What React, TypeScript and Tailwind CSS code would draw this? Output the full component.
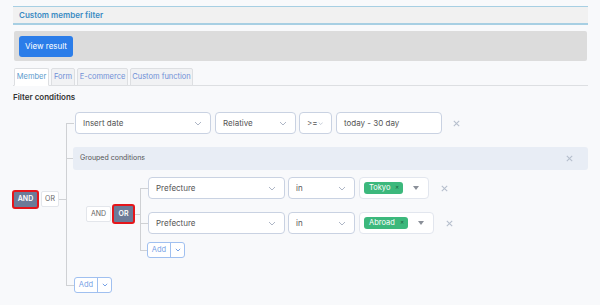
import React from 'react';

const Chevron: React.FC = () => (
  <svg width="8" height="5" viewBox="0 0 8 5" fill="none" stroke="#aeb6c6" strokeWidth="1">
    <path d="M1 1l3 3 3-3" />
  </svg>
);

const Close: React.FC<{ className?: string }> = ({ className }) => (
  <svg className={className} width="7" height="7" viewBox="0 0 7 7" fill="none" stroke="#b6bfcd" strokeWidth="1.1">
    <path d="M0.8 0.8l5.4 5.4M6.2 0.8l-5.4 5.4" />
  </svg>
);

const Select: React.FC<{ label: string; width: string }> = ({ label, width }) => (
  <div
    className={`flex items-center justify-between h-[22px] ${width} shrink-0 rounded-[4px] border border-[#c9d2e2] bg-white pl-[7px] pr-[8px] text-[8px] text-[#555]`}
  >
    <span>{label}</span>
    <Chevron />
  </div>
);

const MultiSelect: React.FC<{ tag: string }> = ({ tag }) => (
  <div className="flex items-center h-[22px] shrink-0 rounded-[4px] border border-[#e2e6ee] bg-white pl-[4px] pr-[9px] gap-[10px]">
    <span className="flex items-center gap-[5px] h-[12px] rounded-[3px] bg-[#3cb87c] pl-[5px] pr-[4px] text-[7.5px] text-white">
      {tag}
      <span className="text-[4.5px] leading-none text-[#1d5a3b]">✕</span>
    </span>
    <svg width="6" height="4" viewBox="0 0 6 4">
      <path d="M0 0h6L3 4z" fill="#8a8f98" />
    </svg>
  </div>
);

const Toggle: React.FC<{ active: 'AND' | 'OR'; outer?: boolean }> = ({ active, outer }) => {
  const andActive = active === 'AND';
  return (
    <div className={`flex items-center ${outer ? 'gap-[2px]' : 'gap-[1px]'}`}>
      <span
        className={
          andActive
            ? 'flex items-center justify-center h-[19px] w-[27px] rounded-[3px] border-2 border-[#e5161b] bg-[#6c7b98] text-[7px] font-semibold text-white'
            : 'flex items-center justify-center h-[16px] w-[25px] rounded-[2px] border border-[#e3e6eb] bg-white text-[7px] text-[#666]'
        }
      >
        AND
      </span>
      <span
        className={
          andActive
            ? 'flex items-center justify-center h-[16px] w-[18px] rounded-[2px] border border-[#e3e6eb] bg-white text-[7px] text-[#666]'
            : 'flex items-center justify-center h-[20px] w-[23px] rounded-[3px] border-2 border-[#e5161b] bg-[#6c7b98] text-[7px] font-semibold text-white'
        }
      >
        OR
      </span>
    </div>
  );
};

const AddButton: React.FC = () => (
  <div className="flex h-[16px] rounded-[3px] border border-[#a0c0f0] bg-white text-[7.5px] text-[#77a2e6]">
    <span className="flex items-center justify-center w-[23px] border-r border-[#a0c0f0]">Add</span>
    <span className="flex items-center justify-center w-[13px]">
      <svg width="6" height="4" viewBox="0 0 6 4" fill="none" stroke="#77a2e6" strokeWidth="1">
        <path d="M0.8 0.8L3 3l2.2-2.2" />
      </svg>
    </span>
  </div>
);

// one child of a condition tree, with its connector line on the left
const Branch: React.FC<{ first?: boolean; last?: boolean; top: string; pad?: string; width: string; children: React.ReactNode }> = ({
  first,
  last,
  top,
  pad = '',
  width,
  children,
}) => (
  <div className="flex">
    <div className={`flex flex-col ${width} shrink-0`}>
      <div className={`${top} shrink-0 ${first ? '' : 'border-l border-[#cfd1d4]'}`} />
      <div className={`flex-1 border-t border-[#cfd1d4] ${last ? '' : 'border-l'}`} />
    </div>
    <div className={`flex-1 ${pad}`}>{children}</div>
  </div>
);

const tabs = [
  { label: 'Member', w: 'w-[35px]' },
  { label: 'Form', w: 'w-[24px]' },
  { label: 'E-commerce', w: 'w-[51px]' },
  { label: 'Custom function', w: 'w-[63px]' },
];

const ConditionRow: React.FC<{ tag: string }> = ({ tag }) => (
  <div className="flex items-center">
    <Select label="Prefecture" width="w-[137px]" />
    <div className="ml-[3px]">
      <Select label="in" width="w-[67px]" />
    </div>
    <div className="ml-[4px]">
      <MultiSelect tag={tag} />
    </div>
    <Close className="ml-[12px]" />
  </div>
);

const App: React.FC = () => {
  return (
    <div className="w-[600px] h-[305px] overflow-hidden bg-[#f8f9fb] font-['Inter',sans-serif] pt-[6px] pl-[13px] pr-[12px]">
      <header className="flex items-center h-[19px] border-t border-b-2 border-[#a7cfe3] bg-[#f1f1f1] pl-[6px] text-[8px] font-semibold text-[#3a8bc3]">
        Custom member filter
      </header>

      <div className="flex items-center h-[30px] mt-[6px] mx-[1px] px-[5px] rounded-[2px] bg-[#dcdcdc]">
        <button className="h-[21px] w-[54px] rounded-[3px] bg-[#2b7de9] text-[8px] text-white">View result</button>
      </div>

      <div className="flex gap-[2px] mt-[7px] pl-[1px] border-b border-[#dddfe2]">
        {tabs.map((t, i) => (
          <div
            key={t.label}
            className={`flex items-center justify-center h-[18px] ${t.w} -mb-px rounded-t-[2px] border border-[#dddfe2] text-[7.5px] ${
              i === 0 ? 'bg-white border-b-white text-[#5b9bcc]' : 'bg-[#f1f2f4] text-[#6f8fd6]'
            }`}
          >
            {t.label}
          </div>
        ))}
      </div>

      <div className="mt-[6px] h-[10px] flex items-center text-[8px] font-semibold text-[#333]">Filter conditions</div>

      <div className="flex items-center mt-[10px] -ml-px">
        <div className="flex items-center pb-[7px]">
          <Toggle active="AND" outer />
          <div className="w-[7px] border-t border-[#cfd1d4]" />
        </div>

        <div className="flex-1 flex flex-col">
          <Branch first top="h-[11px]" width="w-[8px]" pad="pl-px">
            <div className="flex items-center">
              <Select label="Insert date" width="w-[136px]" />
              <div className="ml-[4px]">
                <Select label="Relative" width="w-[81px]" />
              </div>
              <div className="ml-[3px]">
                <Select label=">=" width="w-[33px]" />
              </div>
              <div className="ml-[4px] flex items-center h-[22px] w-[106px] rounded-[4px] border border-[#c9d2e2] bg-white pl-[7px] text-[8px] text-[#555]">
                today - 30 day
              </div>
              <Close className="ml-[11px]" />
            </div>
          </Branch>

          <Branch top="h-[24px]" width="w-[7px]" pad="pt-[13px]">
            <div className="flex items-center justify-between h-[23px] rounded-[3px] bg-[#e8edf5] pl-[7px] pr-[15px] text-[7px] text-[#555]">
              Grouped conditions
              <Close />
            </div>
            <div className="flex items-center mt-[7px] ml-[13px]">
              <div className="flex items-center pb-[7px]">
                <Toggle active="OR" />
                <div className="w-[5px] border-t border-[#cfd1d4]" />
              </div>
              <div className="flex-1 flex flex-col">
                <Branch first top="h-[11px]" width="w-[8px]">
                  <ConditionRow tag="Tokyo" />
                </Branch>
                <Branch top="h-[24px]" width="w-[8px]" pad="pt-[13px]">
                  <ConditionRow tag="Abroad" />
                </Branch>
                <Branch last top="h-[16px]" width="w-[7px]" pad="pt-[8px]">
                  <div className="flex">
                    <AddButton />
                  </div>
                </Branch>
              </div>
            </div>
          </Branch>

          <Branch last top="h-[27px]" width="w-[8px]" pad="pt-[19px]">
            <div className="flex">
              <AddButton />
            </div>
          </Branch>
        </div>
      </div>
    </div>
  );
};

export default App;
